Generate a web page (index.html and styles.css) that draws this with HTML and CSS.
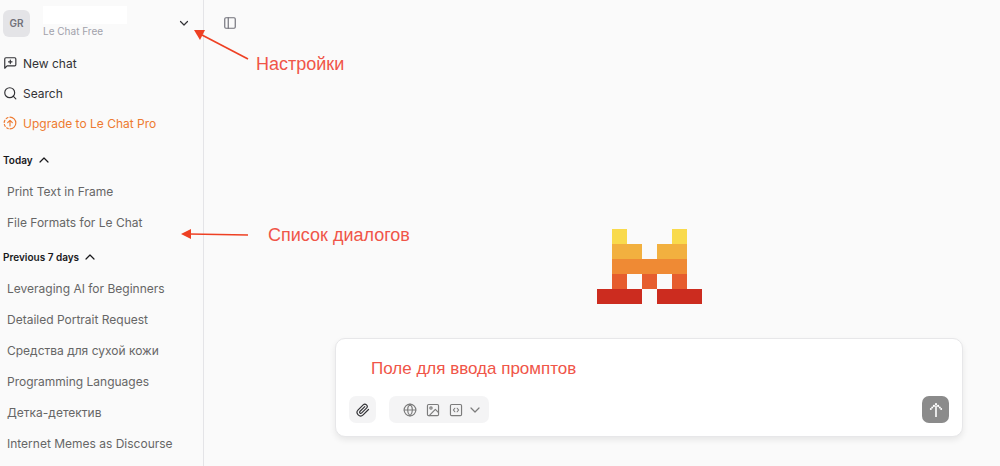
FILE: index.html
```html
<!DOCTYPE html>
<html lang="ru">
<head>
    <meta charset="UTF-8">
    <meta name="viewport" content="width=device-width, initial-scale=1.0">
    <title>Le Chat</title>
    <link rel="stylesheet" href="styles.css">
</head>
<body>

    <div class="app">
        <!-- sidebar start -->
        <aside class="sidebar">
            <button class="account" type="button" aria-label="Account">
                <span class="avatar">GR</span>
                <span class="account-info">
                    <span class="account-name"></span>
                    <span class="account-plan">Le Chat Free</span>
                </span>
                <svg class="chevron" viewBox="0 0 10 10"><path d="M1.5 3.5 5 7l3.5-3.5"/></svg>
            </button>

            <nav class="menu">
                <a class="menu-link" href="#">
                    <svg class="icon" viewBox="0 0 24 24"><path d="M3 21V5a2 2 0 0 1 2-2h15a2 2 0 0 1 2 2v10a2 2 0 0 1-2 2H7zM12.500 7v6M9.500 10h6"/></svg>
                    New chat
                </a>
                <a class="menu-link" href="#">
                    <svg class="icon" viewBox="0 0 24 24"><circle cx="11.500" cy="11.500" r="8.500"/><path d="m17.500 17.500 4.500 4.500"/></svg>
                    Search
                </a>
                <a class="menu-link upgrade" href="#">
                    <svg class="icon" viewBox="0 0 24 24"><path d="M12 2a10 10 0 0 1 0 20M8.500 2.600a10 10 0 0 0-3 1.800M3.200 7.500A10 10 0 0 0 2 11M2.300 14.500a10 10 0 0 0 1.500 3.300M6.300 20.300A10 10 0 0 0 9 21.600M12 17V8M8 11.500l4-4 4 4"/></svg>
                    Upgrade to Le Chat Pro
                </a>
            </nav>

            <section class="history">
                <button class="history-title" type="button">Today
                    <svg class="chevron" viewBox="0 0 10 10"><path d="M1 7l4-4 4 4"/></svg>
                </button>
                <a class="history-link" href="#">Print Text in Frame</a>
                <a class="history-link" href="#">File Formats for Le Chat</a>
            </section>
            <section class="history">
                <button class="history-title" type="button">Previous 7 days
                    <svg class="chevron" viewBox="0 0 10 10"><path d="M1 7l4-4 4 4"/></svg>
                </button>
                <a class="history-link" href="#">Leveraging AI for Beginners</a>
                <a class="history-link" href="#">Detailed Portrait Request</a>
                <a class="history-link" href="#">Средства для сухой кожи</a>
                <a class="history-link" href="#">Programming Languages</a>
                <a class="history-link" href="#">Детка-детектив</a>
                <a class="history-link" href="#">Internet Memes as Discourse</a>
            </section>
        </aside>
        <!-- sidebar end -->

        <main class="main">
            <header class="topbar">
                <button class="toggle" type="button" aria-label="Toggle sidebar">
                    <svg class="icon" viewBox="0 0 24 24"><rect x="3" y="3" width="18" height="18" rx="2"/><path d="M9 3v18"/></svg>
                </button>
            </header>

            <div class="content">
                <svg class="logo" viewBox="0 0 7 5" shape-rendering="crispEdges">
                    <path fill="#f9da4c" d="M1 0h1v1H1zM5 0h1v1H5z"/>
                    <path fill="#f2b03f" d="M1 1h2v1H1zM4 1h2v1H4z"/>
                    <path fill="#ef8a34" d="M1 2h5v1H1z"/>
                    <path fill="#e65d2e" d="M1 3h1v1H1zM3 3h1v1H3zM5 3h1v1H5z"/>
                    <path fill="#cc2c1f" d="M0 4h3v1H0zM4 4h3v1H4z"/>
                </svg>

                <form class="composer">
                    <input class="prompt" type="text" aria-label="Prompt" placeholder="Поле для ввода промптов">
                    <div class="tools">
                        <button class="attach" type="button" aria-label="Attach file">
                            <svg class="icon" viewBox="0 0 24 24"><path d="m21.4 11.1-9.2 9.2a6 6 0 0 1-8.5-8.5l8.6-8.6a4 4 0 0 1 5.7 5.7l-8.6 8.5a2 2 0 0 1-2.8-2.8l8.5-8.5"/></svg>
                        </button>
                        <button class="features" type="button" aria-label="Tools">
                            <svg class="icon" viewBox="0 0 24 24"><circle cx="12" cy="12" r="10"/><path d="M2 12h20M12 2c-5.500 5.500-5.500 14.500 0 20M12 2c5.500 5.500 5.500 14.500 0 20"/></svg>
                            <svg class="icon" viewBox="0 0 24 24"><rect x="2.500" y="2.500" width="19" height="19" rx="2"/><circle cx="8.500" cy="8.500" r="2"/><path d="M5.500 21.500 16 11l5.500 5.500"/></svg>
                            <svg class="icon" viewBox="0 0 24 24"><rect x="2.500" y="2.500" width="19" height="19" rx="2"/><path d="m10 9-2.500 3 2.500 3M14 9l2.500 3-2.500 3"/></svg>
                            <svg class="chevron" viewBox="0 0 10 10"><path d="M1 3l4 4 4-4"/></svg>
                        </button>
                        <button class="send" type="submit" aria-label="Send">
                            <svg viewBox="0 0 14 14"><path d="M6.200 2.500h1.600V14H6.200z"/><circle cx="7" cy="1.200" r="1.100"/><circle cx="4.900" cy="2.900" r="1.100"/><circle cx="9.100" cy="2.900" r="1.100"/><circle cx="3.200" cy="4.600" r="1"/><circle cx="10.800" cy="4.600" r="1"/><circle cx="1.800" cy="6" r="1"/><circle cx="12.200" cy="6" r="1"/></svg>
                        </button>
                    </div>
                </form>
            </div>
        </main>

        <!-- notes over the interface -->
        <svg class="arrow arrow-settings" viewBox="0 0 56 32"><path d="M54 29 8 5"/><path class="head" d="M0 0h11L6 10z"/></svg>
        <p class="note note-settings">Настройки</p>
        <svg class="arrow arrow-dialogs" viewBox="0 0 68 12"><path d="M67 7 8 6"/><path class="head" d="M0 6 10 1v10z"/></svg>
        <p class="note note-dialogs">Список диалогов</p>
    </div>

</body>
</html>
```
FILE: styles.css
```css
* {
    box-sizing: border-box;
}

body {
    margin: 0;
    background: #fafafa;
    color: #323236;
    font-family: Inter, "Liberation Sans", sans-serif;
    font-size: 12px;
}

button {
    margin: 0;
    padding: 0;
    border: none;
    background: none;
    color: inherit;
    font: inherit;
    text-align: left;
    cursor: pointer;
}

a {
    color: inherit;
    text-decoration: none;
}

svg {
    display: block;
    flex: none;
}

.icon,
.chevron {
    fill: none;
    stroke: currentColor;
    stroke-linecap: round;
    stroke-linejoin: round;
}

.icon {
    width: 14px;
    height: 14px;
    stroke-width: 2;
}

.chevron {
    width: 10px;
    height: 10px;
    stroke-width: 1.2;
}

.app {
    position: relative;
    display: flex;
    min-height: 100vh;
}

/* sidebar */
.sidebar {
    flex: none;
    width: 204px;
    padding: 0 3px;
    border-right: 1px solid #e4e4e7;
}

.account {
    display: flex;
    align-items: center;
    width: 100%;
    height: 48px;
    padding: 0 11px 2px 0;
}

.avatar {
    width: 27px;
    height: 27px;
    border-radius: 6px;
    background: #e4e4e7;
    color: #71717a;
    font-size: 10px;
    font-weight: 600;
    line-height: 27px;
    text-align: center;
}

.account-info {
    flex: 1;
    margin-left: 13px;
    padding-bottom: 3px;
}

.account-name {
    display: block;
    width: 84px;
    height: 18px;
    background: #fff;
}

.account-plan {
    display: block;
    color: #a1a1aa;
    font-size: 10px;
    line-height: 14px;
}

.menu {
    margin-bottom: 3px;
}

.menu-link {
    display: flex;
    align-items: center;
    gap: 6px;
    height: 30px;
}

.upgrade {
    color: #ee7a30;
}

.history {
    padding-top: 2px;
}

.history-title {
    display: flex;
    align-items: center;
    gap: 6px;
    height: 33px;
    color: #18181b;
    font-size: 10px;
    font-weight: 600;
}

.history-link {
    display: block;
    padding-left: 4px;
    color: #666;
    line-height: 31px;
}

/* main area */
.main {
    flex: 1;
    min-width: 0;
}

.topbar {
    display: flex;
    align-items: center;
    height: 46px;
    padding-left: 19px;
    color: #71717a;
}

.content {
    padding: 183px 37px 0 131px;
}

.logo {
    width: 105px;
    height: 75px;
    margin: 0 auto 34px;
}

.composer {
    padding: 12px 13px 13px;
    border: 1px solid #e7e7e9;
    border-radius: 10px;
    background: #fff;
    box-shadow: 0 3px 6px rgba(0, 0, 0, 0.08);
}

.prompt {
    display: block;
    width: 100%;
    height: 36px;
    margin-bottom: 9px;
    padding: 0 22px;
    border: none;
    outline: none;
    background: none;
    font-family: "Liberation Sans", Arial, sans-serif;
    font-size: 17px;
}

.prompt::placeholder {
    color: #f05548;
    opacity: 1;
}

.tools {
    display: flex;
    align-items: center;
}

.attach,
.features,
.send {
    display: flex;
    align-items: center;
    justify-content: center;
    height: 27px;
    border-radius: 7px;
    background: #f4f4f5;
}

.attach {
    width: 27px;
    margin-right: 13px;
}

.features {
    justify-content: flex-start;
    gap: 9px;
    width: 100px;
    padding-left: 14px;
    color: #7c7c7c;
}

.features .chevron {
    margin-left: -2px;
}

.send {
    width: 27px;
    margin-left: auto;
    background: #8b8b8b;
}

.send svg {
    width: 14px;
    height: 14px;
    fill: #fff;
}

/* notes */
.note {
    position: absolute;
    margin: 0;
    color: #f05548;
    font-family: "Liberation Sans", Arial, sans-serif;
    font-size: 18px;
    line-height: 20px;
}

.note-settings {
    top: 54px;
    left: 256px;
}

.note-dialogs {
    top: 225px;
    left: 268px;
}

.arrow {
    position: absolute;
    fill: none;
    stroke: #ee4023;
    stroke-width: 1.6;
}

.arrow .head {
    fill: #ee4023;
    stroke: none;
}

.arrow-settings {
    top: 30px;
    left: 194px;
    width: 56px;
    height: 32px;
}

.arrow-dialogs {
    top: 228px;
    left: 181px;
    width: 68px;
    height: 12px;
}
```
